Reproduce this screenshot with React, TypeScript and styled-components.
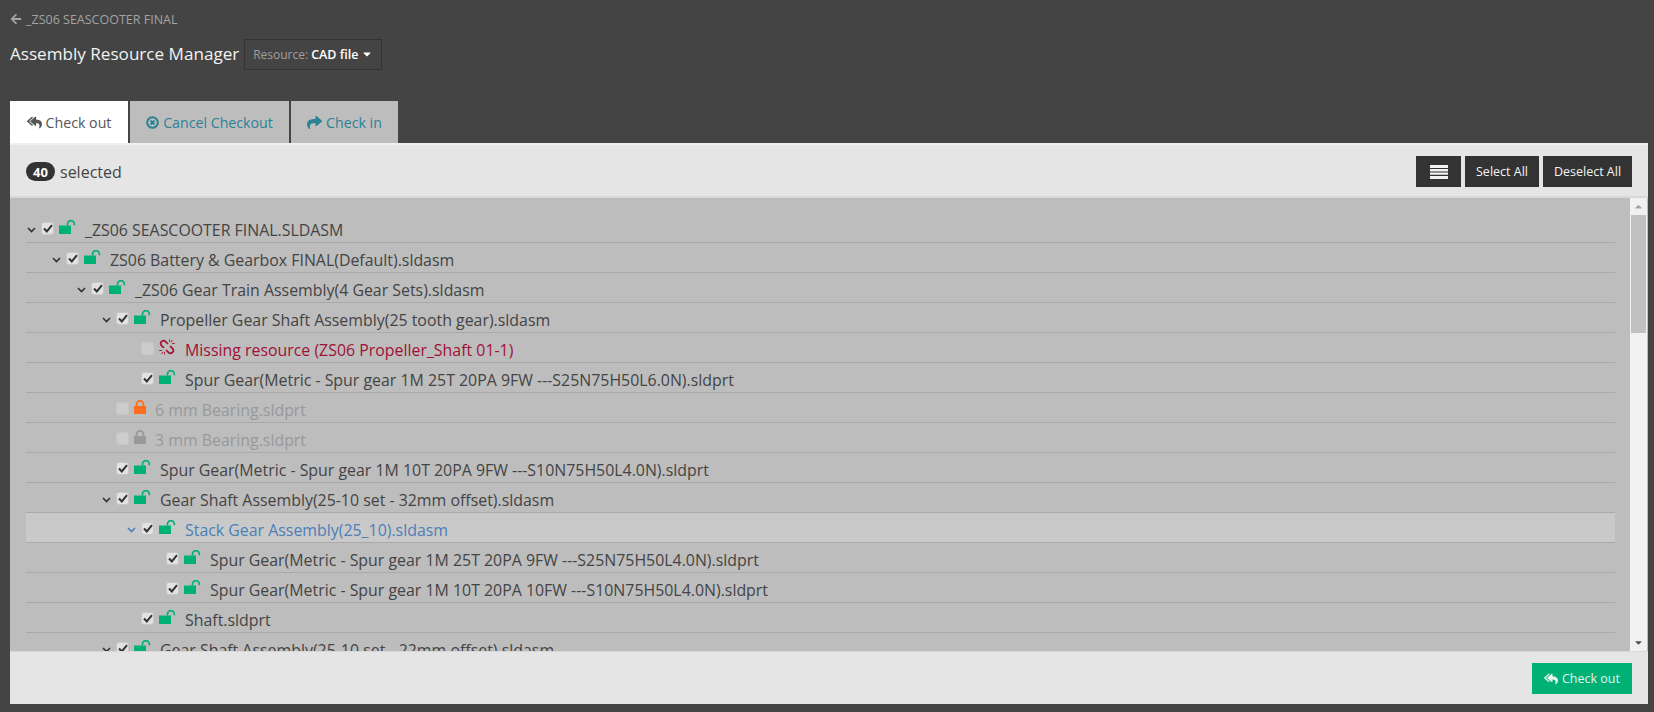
import styled, { createGlobalStyle } from 'styled-components';
import { FaArrowLeft, FaReplyAll, FaShare, FaCaretDown, FaCaretUp } from 'react-icons/fa';

type LockKind = 'open' | 'orange' | 'grey' | 'missing';

type TreeItem = {
  level: number;
  name: string;
  lock: LockKind;
  checked?: boolean;
  expand?: boolean;
  active?: boolean;
};

const items: TreeItem[] = [
  { level: 0, name: '_ZS06 SEASCOOTER FINAL.SLDASM', lock: 'open', checked: true, expand: true },
  { level: 1, name: 'ZS06 Battery & Gearbox FINAL(Default).sldasm', lock: 'open', checked: true, expand: true },
  { level: 2, name: '_ZS06 Gear Train Assembly(4 Gear Sets).sldasm', lock: 'open', checked: true, expand: true },
  { level: 3, name: 'Propeller Gear Shaft Assembly(25 tooth gear).sldasm', lock: 'open', checked: true, expand: true },
  { level: 4, name: 'Missing resource (ZS06 Propeller_Shaft 01-1)', lock: 'missing' },
  { level: 4, name: 'Spur Gear(Metric - Spur gear 1M 25T 20PA 9FW ---S25N75H50L6.0N).sldprt', lock: 'open', checked: true },
  { level: 3, name: '6 mm Bearing.sldprt', lock: 'orange' },
  { level: 3, name: '3 mm Bearing.sldprt', lock: 'grey' },
  { level: 3, name: 'Spur Gear(Metric - Spur gear 1M 10T 20PA 9FW ---S10N75H50L4.0N).sldprt', lock: 'open', checked: true },
  { level: 3, name: 'Gear Shaft Assembly(25-10 set - 32mm offset).sldasm', lock: 'open', checked: true, expand: true },
  { level: 4, name: 'Stack Gear Assembly(25_10).sldasm', lock: 'open', checked: true, expand: true, active: true },
  { level: 5, name: 'Spur Gear(Metric - Spur gear 1M 25T 20PA 9FW ---S25N75H50L4.0N).sldprt', lock: 'open', checked: true },
  { level: 5, name: 'Spur Gear(Metric - Spur gear 1M 10T 20PA 10FW ---S10N75H50L4.0N).sldprt', lock: 'open', checked: true },
  { level: 4, name: 'Shaft.sldprt', lock: 'open', checked: true },
  { level: 3, name: 'Gear Shaft Assembly(25-10 set - 22mm offset).sldasm', lock: 'open', checked: true, expand: true },
];

const GlobalStyle = createGlobalStyle`
  html, body {
    margin: 0;
    background: #444444;
    font-family: "Open Sans", "Liberation Sans", sans-serif;
  }
  * {
    box-sizing: border-box;
  }
`;

const Page = styled.div`
  height: 712px;
  padding: 11px 6px 8px 10px;
  display: flex;
  flex-direction: column;
  overflow: hidden;
`;

const BackLink = styled.a`
  display: flex;
  align-items: center;
  gap: 4px;
  height: 16px;
  font-size: 12.5px;
  color: #a3a3a3;
`;

const TitleRow = styled.div`
  display: flex;
  align-items: center;
  gap: 5px;
  margin-top: 12px;
  height: 30px;
`;

const Title = styled.h1`
  margin: 0 0 1px;
  font-size: 17.1px;
  font-weight: 400;
  color: #f2f2f2;
`;

const ResourceButton = styled.button`
  width: 138px;
  height: 31px;
  padding: 0;
  background: #444444;
  border: 1px solid #333333;
  font-family: inherit;
  font-size: 12px;
  color: #a0a0a0;
  display: flex;
  align-items: center;
  justify-content: center;
  gap: 3px;

  b {
    font-size: 12.5px;
    font-weight: 600;
    color: #ffffff;
  }
`;

const Tabs = styled.div`
  display: flex;
  gap: 2px;
  margin-top: 32px;
  height: 42px;
`;

const Tab = styled.div<{ $active?: boolean; $width: number }>`
  width: ${p => p.$width}px;
  display: flex;
  align-items: center;
  justify-content: center;
  gap: 4px;
  font-size: 14.2px;
  background: ${p => (p.$active ? '#ffffff' : '#bdbdbd')};
  color: ${p => (p.$active ? '#555555' : '#2b8296')};
`;

const Panel = styled.div`
  flex: 1;
  min-height: 0;
  display: flex;
  flex-direction: column;
  background: #e5e5e5;
`;

const PanelHeader = styled.div`
  height: 55px;
  border-top: 2px solid #f0f0f0;
  border-bottom: 2px solid #d8d8d8;
  padding: 11px 16px 0 16px;
  display: flex;
  justify-content: space-between;
`;

const SelectedInfo = styled.div`
  display: flex;
  align-items: center;
  gap: 5px;
  height: 31px;
  font-size: 16px;
  color: #444444;
`;

const Count = styled.span`
  width: 29px;
  height: 19px;
  border-radius: 10px;
  background: #333333;
  color: #ffffff;
  font-size: 13px;
  font-weight: 700;
  display: flex;
  align-items: center;
  justify-content: center;
`;

const HeaderActions = styled.div`
  display: flex;
  gap: 4px;
`;

const DarkButton = styled.button<{ $width: number }>`
  width: ${p => p.$width}px;
  height: 31px;
  padding: 0;
  border: 0;
  background: #333333;
  color: #f4f4f4;
  font-family: inherit;
  font-size: 12.5px;
  font-weight: 500;
  display: flex;
  align-items: center;
  justify-content: center;
`;

const TreeArea = styled.div`
  flex: 1;
  min-height: 0;
  display: flex;
  background: #bdbdbd;
`;

const Tree = styled.div`
  flex: 1;
  min-width: 0;
  padding: 15px 15px 0 16px;
  overflow: hidden;
`;

const Row = styled.div<{ $level: number; $active?: boolean }>`
  height: 30px;
  display: flex;
  align-items: center;
  padding-top: 4px;
  padding-left: ${p => p.$level * 25}px;
  border-bottom: 1px solid #a9a9a9;
  background: ${p => (p.$active ? '#c9c9c9' : 'transparent')};
`;

const ChevronSlot = styled.span<{ $color: string }>`
  width: 16px;
  margin-top: 1px;
  display: flex;
  padding-left: 1px;
  color: ${p => p.$color};
`;

const CheckBox = styled.span<{ $checked?: boolean }>`
  width: 11px;
  height: 11px;
  margin-top: -3px;
  border-radius: 2px;
  background: ${p => (p.$checked ? '#e2e2e2' : '#cdcdcd')};
  box-shadow: 0 0 0 1px ${p => (p.$checked ? '#c8c8c8' : '#c6c6c6')};
  display: flex;
  align-items: center;
  justify-content: center;
`;

const LockSlot = styled.span<{ $narrow?: boolean }>`
  width: ${p => (p.$narrow ? 14 : 19)}px;
  margin-left: 6px;
  margin-top: -5px;
  display: flex;
`;

const Name = styled.span<{ $kind: 'normal' | 'missing' | 'disabled' | 'active' }>`
  margin-left: 7px;
  font-size: 15.9px;
  white-space: nowrap;
  color: ${p =>
    p.$kind === 'missing'
      ? '#a11136'
      : p.$kind === 'disabled'
      ? '#999999'
      : p.$kind === 'active'
      ? '#4b80b8'
      : '#444444'};
`;

const Scrollbar = styled.div`
  width: 17px;
  margin-right: 1px;
  background: #f1f1f1;
  display: flex;
  flex-direction: column;
`;

const ScrollArrow = styled.span<{ $color: string }>`
  height: 17px;
  display: flex;
  align-items: center;
  justify-content: center;
  font-size: 11px;
  color: ${p => p.$color};
`;

const ScrollTrack = styled.div`
  flex: 1;
`;

const ScrollThumb = styled.div`
  height: 118px;
  background: #c1c1c1;
  margin: 0 1px;
`;

const PanelFooter = styled.div`
  height: 53px;
  border-top: 1px solid #d8d8d8;
  padding: 11px 16px 0 0;
  display: flex;
  justify-content: flex-end;
`;

const CheckoutButton = styled.button`
  width: 100px;
  height: 31px;
  padding: 0;
  border: 0;
  background: #00b176;
  color: #e6f5ee;
  font-family: inherit;
  font-size: 12.5px;
  font-weight: 500;
  display: flex;
  align-items: center;
  justify-content: center;
  gap: 4px;
`;

const Chevron = () => (
  <svg width="9" height="6" viewBox="0 0 9 6">
    <path d="M1 1l3.5 3.5L8 1" fill="none" stroke="currentColor" strokeWidth="1.6" />
  </svg>
);

const Tick = () => (
  <svg width="10" height="9" viewBox="0 0 10 9">
    <path d="M1 4.5l2.8 3L9 1.2" fill="none" stroke="#333333" strokeWidth="2" />
  </svg>
);

const UnlockIcon = () => (
  <svg width="17" height="14" viewBox="0 0 17 14">
    <path d="M0 5.5h12V14H0z" fill="#00b176" />
    <path d="M8.5 5.5V4a3.4 3.4 0 0 1 6.8 0v1.2" fill="none" stroke="#00b176" strokeWidth="1.7" />
  </svg>
);

const LockIcon = ({ color }: { color: string }) => (
  <svg width="12" height="14" viewBox="0 0 12 14">
    <path d="M0 6h12v8H0z" fill={color} />
    <path d="M2.6 6V4.2a3.4 3.4 0 0 1 6.8 0V6" fill="none" stroke={color} strokeWidth="1.8" />
  </svg>
);

// chain with sparks, the broken link of the missing resource row
const BrokenLinkIcon = () => (
  <svg width="16" height="16" viewBox="0 0 16 16" fill="none" stroke="#a11136">
    <path d="M5 9L2.3 6.3a2.4 2.4 0 0 1 0-3.4l.6-.6a2.4 2.4 0 0 1 3.4 0L9 5" strokeWidth="1.7" />
    <path d="M11 7l2.7 2.7a2.4 2.4 0 0 1 0 3.4l-.6.6a2.4 2.4 0 0 1-3.4 0L7 11" strokeWidth="1.7" />
    <path d="M10.5 0.5v2.5M13.5 1l-1.5 2.2M15.8 4.5h-2.8M0.2 11.5H3M2.5 15l1.5-2.2M5.5 15.5V13" strokeWidth="0.9" />
  </svg>
);

const CancelIcon = () => (
  <svg width="13" height="13" viewBox="0 0 13 13">
    <circle cx="6.5" cy="6.5" r="5.3" fill="none" stroke="#2b8296" strokeWidth="2" />
    <path d="M4.5 4.5l4 4M8.5 4.5l-4 4" stroke="#2b8296" strokeWidth="1.8" />
  </svg>
);

const ListIcon = () => (
  <svg width="18" height="14" viewBox="0 0 18 14">
    <path d="M0 0h18v3H0zM0 4h18v2.4H0zM0 7.4h18v2.4H0zM0 11h18v3H0z" fill="#f2f2f2" />
  </svg>
);

const lockFor = (kind: LockKind) => {
  if (kind === 'open') return <UnlockIcon />;
  if (kind === 'orange') return <LockIcon color="#ff6d1f" />;
  if (kind === 'grey') return <LockIcon color="#999999" />;
  return <BrokenLinkIcon />;
};

const nameKind = (item: TreeItem) => {
  if (item.lock === 'missing') return 'missing' as const;
  if (item.lock === 'open') return item.active ? ('active' as const) : ('normal' as const);
  return 'disabled' as const;
};

export default function App() {
  return (
    <Page>
      <GlobalStyle />
      <BackLink>
        <FaArrowLeft size={12} />
        _ZS06 SEASCOOTER FINAL
      </BackLink>
      <TitleRow>
        <Title>Assembly Resource Manager</Title>
        <ResourceButton>
          Resource: <b>CAD file</b>
          <FaCaretDown size={12} color="#ffffff" />
        </ResourceButton>
      </TitleRow>
      <Tabs>
        <Tab $active $width={118}>
          <FaReplyAll size={15} />
          Check out
        </Tab>
        <Tab $width={159}>
          <CancelIcon />
          Cancel Checkout
        </Tab>
        <Tab $width={107}>
          <FaShare size={15} />
          Check in
        </Tab>
      </Tabs>
      <Panel>
        <PanelHeader>
          <SelectedInfo>
            <Count>40</Count>
            selected
          </SelectedInfo>
          <HeaderActions>
            <DarkButton $width={45}>
              <ListIcon />
            </DarkButton>
            <DarkButton $width={74}>Select All</DarkButton>
            <DarkButton $width={89}>Deselect All</DarkButton>
          </HeaderActions>
        </PanelHeader>
        <TreeArea>
          <Tree>
            {items.map(item => (
              <Row key={item.name} $level={item.level} $active={item.active}>
                <ChevronSlot $color={item.active ? '#4b80b8' : '#333333'}>
                  {item.expand && <Chevron />}
                </ChevronSlot>
                <CheckBox $checked={item.checked}>{item.checked && <Tick />}</CheckBox>
                <LockSlot $narrow={item.lock === 'orange' || item.lock === 'grey'}>{lockFor(item.lock)}</LockSlot>
                <Name $kind={nameKind(item)}>{item.name}</Name>
              </Row>
            ))}
          </Tree>
          <Scrollbar>
            <ScrollArrow $color="#a3a3a3">
              <FaCaretUp />
            </ScrollArrow>
            <ScrollTrack>
              <ScrollThumb />
            </ScrollTrack>
            <ScrollArrow $color="#505050">
              <FaCaretDown />
            </ScrollArrow>
          </Scrollbar>
        </TreeArea>
        <PanelFooter>
          <CheckoutButton>
            <FaReplyAll size={14} />
            Check out
          </CheckoutButton>
        </PanelFooter>
      </Panel>
    </Page>
  );
}
